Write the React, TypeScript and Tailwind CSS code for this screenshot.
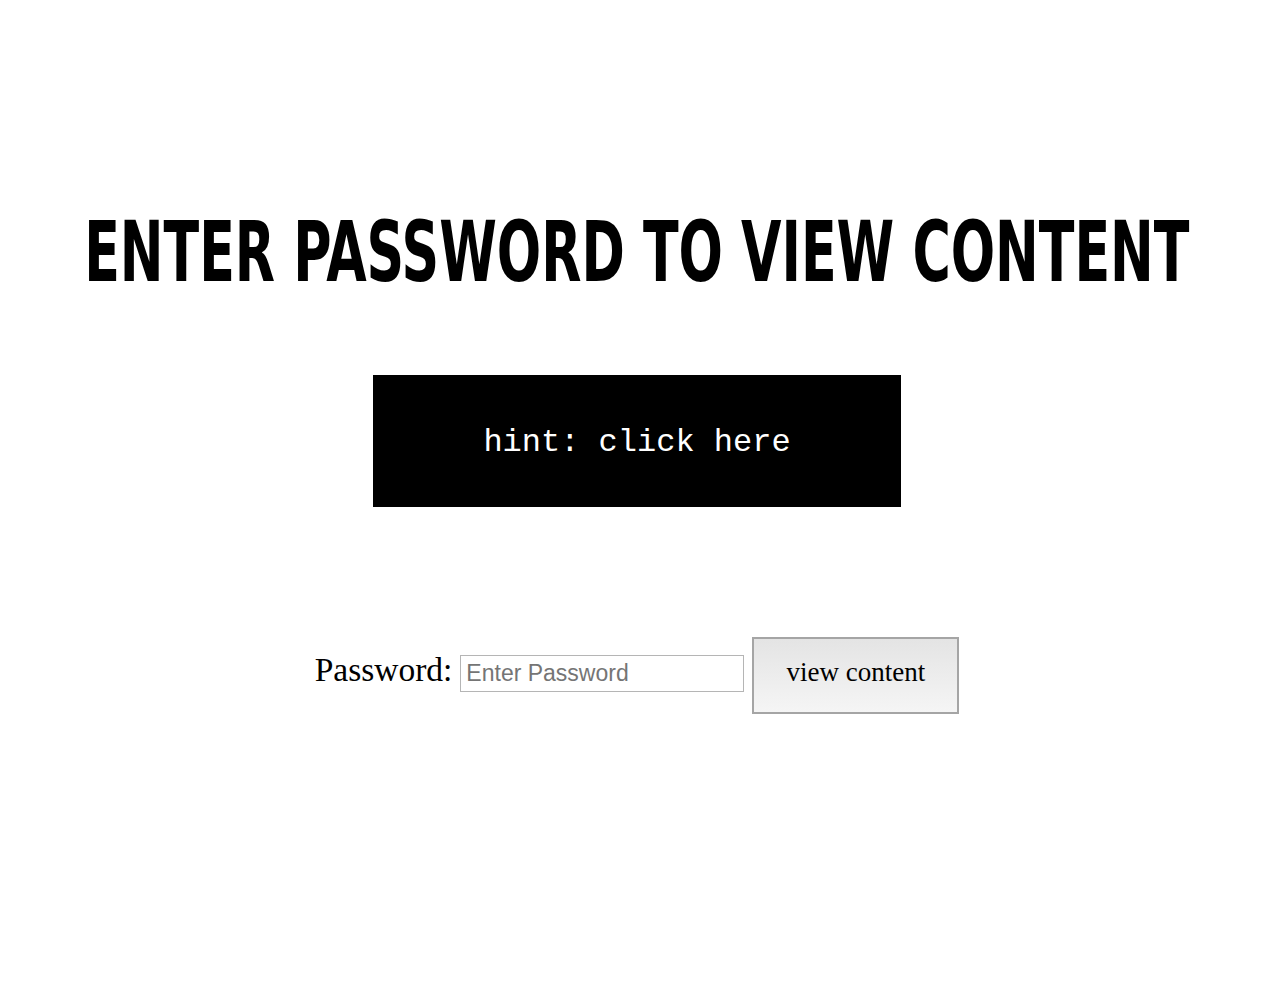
import React from "react";

export default function App() {
  return (
    <div className="w-[1274px] min-h-[1008px] bg-white flex flex-col items-center">
      <div className="mt-[210px] h-[84px] w-full flex justify-center overflow-visible">
        <h1
          className="inline-block whitespace-nowrap text-[84px] leading-[84px] font-bold text-black scale-x-[0.691] origin-center"
          style={{ fontFamily: '"DejaVu Sans Condensed", "DejaVu Sans", sans-serif', fontStretch: "condensed" }}
        >
          ENTER PASSWORD TO VIEW CONTENT
        </h1>
      </div>
      <div className="mt-[81px] w-[528px] h-[132px] bg-black flex items-center justify-center">
        <span className="mt-[4px] text-white text-[32px] leading-none font-['Liberation_Mono',monospace]">
          hint: click here
        </span>
      </div>
      <div className="mt-[130px] flex items-start font-['Liberation_Serif',serif]">
        <label className="mt-[16px] text-[33.5px] leading-none text-black">Password:</label>
        <input
          type="password"
          placeholder="Enter Password"
          className="mt-[18px] ml-[8px] w-[284px] h-[37px] border border-[#b5b5b5] px-[5px] text-[23px] font-['Liberation_Sans',sans-serif] placeholder:text-[#757575] outline-none"
        />
        <button className="ml-[8px] w-[207px] h-[77px] pb-[6px] border-2 border-[#a5a5a5] bg-gradient-to-b from-[#e4e4e4] to-[#f5f5f5] text-[27px] leading-none text-black font-['Liberation_Serif',serif]">
          view content
        </button>
      </div>
    </div>
  );
}
